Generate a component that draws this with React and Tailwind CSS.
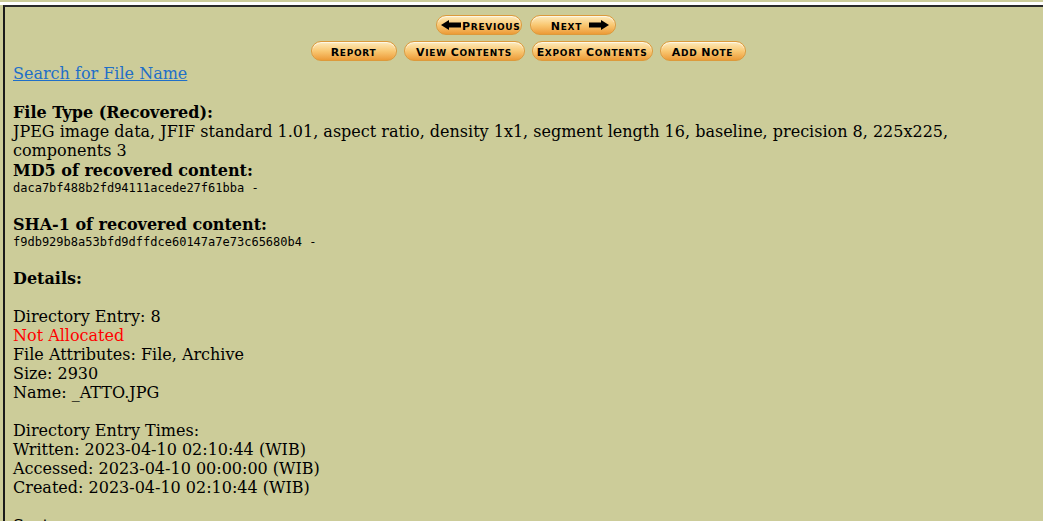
import React from 'react';

const btn =
  "inline-flex h-[20px] items-center rounded-full border border-[#dc9a3c] bg-linear-to-b from-[#fdebbb] via-[#f9c872] to-[#ec9b36] font-['DejaVu_Sans',sans-serif] leading-none font-bold text-black shadow-[inset_0_1px_1px_rgba(255,255,255,0.7)]";

const Arrow = ({ flip }) => (
  <svg width="20" height="10" viewBox="0 0 20 10" className={flip ? 'scale-x-[-1]' : ''}>
    <polygon points="0,5 8,0 8,2.5 20,2.5 20,7.5 8,7.5 8,10" fill="#000" />
  </svg>
);

// small caps drawn by hand: first letter large, the rest smaller capitals
const Caps = ({ text }) => (
  <span className="whitespace-nowrap tracking-[0.7px]">
    {text.split(' ').map((word, i) => (
      <React.Fragment key={i}>
        {i > 0 && <span className="text-[9px]"> </span>}
        <span className="text-[11px]">{word[0]}</span>
        <span className="text-[9px] uppercase">{word.slice(1)}</span>
      </React.Fragment>
    ))}
  </span>
);

const Line = ({ children, className = '' }) => (
  <div className={`h-[19px] leading-[19px] whitespace-nowrap ${className}`}>{children}</div>
);

const Hash = ({ children }) => (
  <div className="h-[16px] leading-[16px] font-['DejaVu_Sans_Mono',monospace] text-[12px]">{children}</div>
);

export default function App() {
  return (
    <div className="h-screen overflow-hidden bg-[#cccc99] pt-[2px]">
      <div className="h-[3px] bg-white"></div>
      <div className="ml-[3px] h-full border-t-2 border-l-2 border-t-[#2a2a2a] border-l-[#1a1a1a] pl-[8px] pt-[8px] font-['DejaVu_Serif',serif] text-[16px] text-black">
        {/* Navigation buttons */}
        <div className="flex justify-center gap-[8px] pr-[4px]">
          <span className={`${btn} w-[86px] justify-start gap-[1px] pl-[4px]`}>
            <Arrow />
            <Caps text="Previous" />
          </span>
          <span className={`${btn} w-[86px] justify-end gap-[7px] pr-[6px]`}>
            <Caps text="Next" />
            <Arrow flip />
          </span>
        </div>
        <div className="mt-[6px] flex justify-center gap-[7px]">
          <span className={`${btn} w-[86px] justify-center`}><Caps text="Report" /></span>
          <span className={`${btn} w-[121px] justify-center`}><Caps text="View Contents" /></span>
          <span className={`${btn} w-[121px] justify-center`}><Caps text="Export Contents" /></span>
          <span className={`${btn} w-[86px] justify-center`}><Caps text="Add Note" /></span>
        </div>

        <div className="mt-[3px] pr-[8px]">
          <Line>
            <a href="#" className="text-[#1f6fc8] underline">Search for File Name</a>
          </Line>
          <div className="h-[20px]"></div>
          <Line className="font-bold">File Type (Recovered):</Line>
          <div className="mb-[1px] leading-[19px]">
            JPEG image data, JFIF standard 1.01, aspect ratio, density 1x1, segment length 16, baseline, precision 8, 225x225, components 3
          </div>
          <Line className="font-bold">MD5 of recovered content:</Line>
          <Hash>daca7bf488b2fd94111acede27f61bba -</Hash>
          <Line />
          <Line className="font-bold">SHA-1 of recovered content:</Line>
          <Hash>f9db929b8a53bfd9dffdce60147a7e73c65680b4 -</Hash>
          <Line />
          <Line className="font-bold">Details:</Line>
          <Line />
          <Line>Directory Entry: 8</Line>
          <Line className="text-[#ff0000]">Not Allocated</Line>
          <Line>File Attributes: File, Archive</Line>
          <Line>Size: 2930</Line>
          <Line>Name: _ATTO.JPG</Line>
          <Line />
          <Line>Directory Entry Times:</Line>
          <Line>Written: 2023-04-10 02:10:44 (WIB)</Line>
          <Line>Accessed: 2023-04-10 00:00:00 (WIB)</Line>
          <Line>Created: 2023-04-10 02:10:44 (WIB)</Line>
          <Line />
          <Line>Sectors:</Line>
          <Line>1547</Line>
        </div>
      </div>
    </div>
  );
}
